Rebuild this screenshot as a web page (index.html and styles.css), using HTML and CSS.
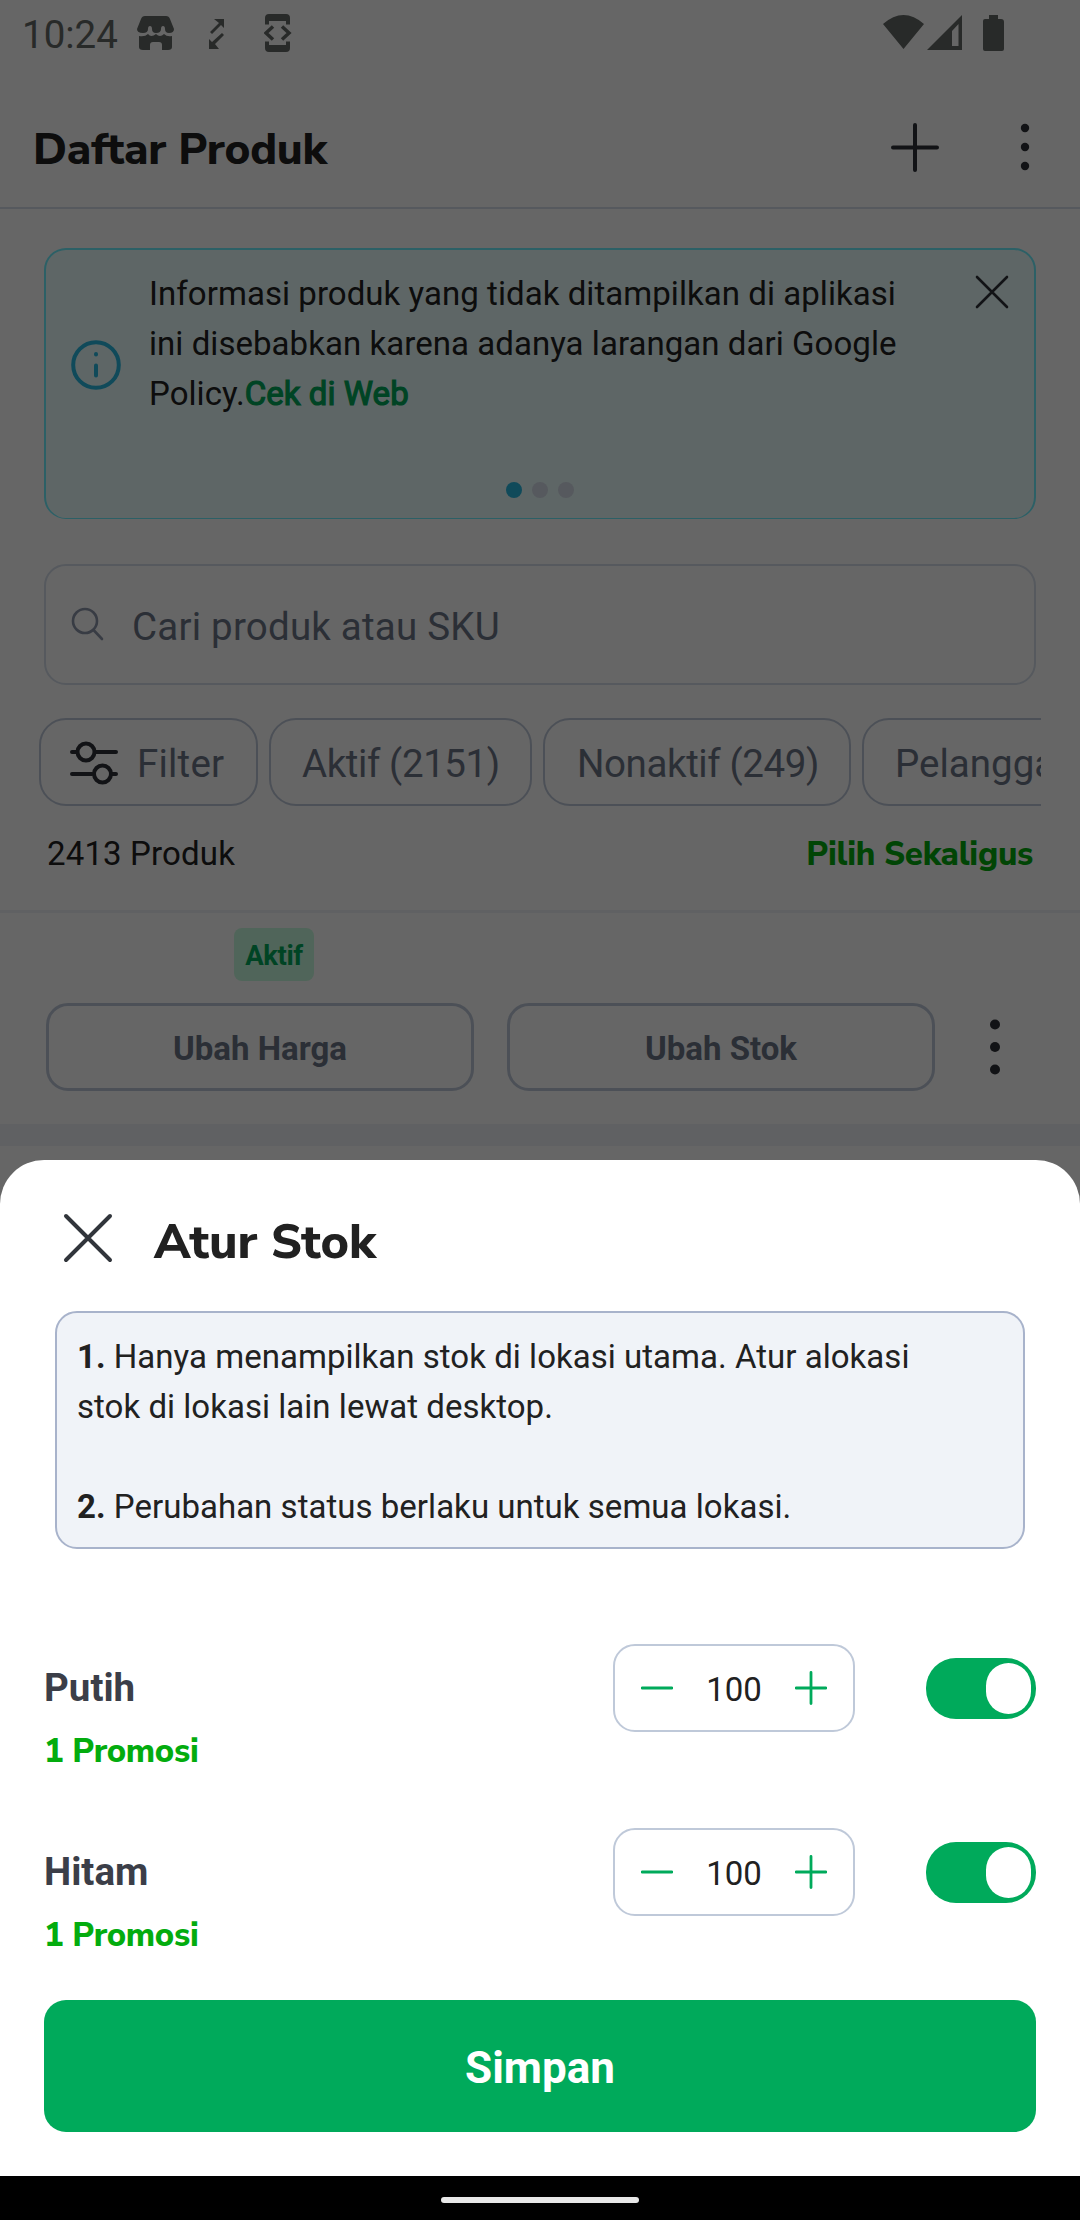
FILE: index.html
```html
<!DOCTYPE html>
<html lang="id">
<head>
<meta charset="utf-8">
<title>Daftar Produk</title>
<link rel="stylesheet" href="styles.css">
</head>
<body>
<div class="phone">
  <main class="page">
    <div class="statusbar">
      <span class="clock">10:24</span>
      <svg class="st-store" width="37" height="35" viewBox="0 0 37 35"><path d="M8 0h21q3 0 4 3l4 10q0 4-5 4-4 0-4-4 0-3-2-3t-2 3q0 4-5 4-4 0-4-4 0-3-2-3t-2 3q0 4-5 4-6 0-6-4L4 3q1-3 4-3zM2 20q6 1 9-2 3 4 8 0 4 4 8 0 3 3 8 2v11q0 3-4 3h-6v-5q0-3-3-3h-6q-3 0-3 3v5H6q-4 0-4-3z"/></svg>
      <svg class="st-arrows" width="16" height="30" viewBox="0 0 16 30"><path d="M5 0h10v9l-3-3-9 9-2-2 9-9zM0 20l3 3 10-9 2 2-9 9 4 5H0z"/></svg>
      <svg class="st-dev" width="28" height="38" viewBox="0 0 28 38"><path d="M1 10.500V4q0-4 4-4h17q4 0 4 4v6.500h-4V7H5v3.500zM1 27.500V34q0 4 4 4h17q4 0 4-4v-6.500h-4V31H5v-3.500z"/><path class="chev" d="M9 12.500L2 19l7 6.500M18 12.500L25 19l-7 6.500"/></svg>
      <svg class="st-right" width="122" height="37" viewBox="0 0 122 37"><path d="M0 9Q20.500-9 41 9L20.500 34zM79 0v35H44zM75.500 9L69 16v15h6.500zM106 0h9v4h3q3 0 3 3v27q0 2-2 2h-17q-2 0-2-2V6q0-2 2-2h4z" fill-rule="evenodd"/></svg>
    </div>
    <header class="appbar">
      <h1>Daftar Produk</h1>
      <svg class="plus" width="50" height="50" viewBox="0 0 50 50"><path d="M25 3v45M3 25.500h44"/></svg>
      <svg class="more" width="10" height="50" viewBox="0 0 10 50"><circle cx="5" cy="6" r="4.200"/><circle cx="5" cy="25" r="4.200"/><circle cx="5" cy="44" r="4.200"/></svg>
    </header>
    <section class="banner">
      <svg class="info" width="50" height="50" viewBox="0 0 50 50"><circle cx="25" cy="25" r="22.800"/><path d="M25 25.500v10M25 14v.5"/></svg>
      <p>Informasi produk yang tidak ditampilkan di aplikasi<br>ini disebabkan karena adanya larangan dari Google<br>Policy.<a>Cek di Web</a></p>
      <svg class="close-sm" width="34" height="34" viewBox="0 0 34 34"><path d="M2 2l30 30M32 2L2 32"/></svg>
      <div class="pager"><i class="on"></i><i></i><i></i></div>
    </section>
    <div class="search">
      <svg width="34" height="34" viewBox="0 0 34 34"><circle cx="14" cy="14" r="12"/><path d="M22.500 23l8.500 9"/></svg>
      <span>Cari produk atau SKU</span>
    </div>
    <div class="chips">
      <div class="chip filter"><svg width="48" height="44" viewBox="0 0 48 44"><path d="M2 11h5M26 11h20M2 33h20M41 33h5"/><circle cx="16" cy="11" r="8.500"/><circle cx="32.500" cy="33" r="8.500"/></svg><span>Filter</span></div>
      <div class="chip c-active">Aktif (2151)</div>
      <div class="chip c-inactive">Nonaktif (249)</div>
      <div class="chip">Pelangga</div>
    </div>
    <div class="count"><span>2413 Produk</span><b class="nun">Pilih Sekaligus</b></div>
    <article class="product">
      <span class="badge">Aktif</span>
      <div class="actions">
        <div class="btn">Ubah Harga</div>
        <div class="btn">Ubah Stok</div>
        <svg width="12" height="60" viewBox="0 0 12 60"><circle cx="6" cy="7.500" r="5"/><circle cx="6" cy="30" r="5"/><circle cx="6" cy="52.500" r="5"/></svg>
      </div>
    </article>
  </main>
  <div class="scrim"></div>
  <section class="sheet">
    <header class="sheet-head">
      <svg width="50" height="50" viewBox="0 0 50 50"><path d="M3 3l44 44M47 3L3 47"/></svg>
      <h2>Atur Stok</h2>
    </header>
    <div class="note"><p><b>1.</b> Hanya menampilkan stok di lokasi utama. Atur alokasi<br>stok di lokasi lain lewat desktop.</p><p><b>2.</b> Perubahan status berlaku untuk semua lokasi.</p></div>
    <div class="variant">
      <div class="v-name"><strong>Putih</strong><b class="nun">1 Promosi</b></div>
      <div class="stepper"><svg width="32" height="34" viewBox="0 0 32 34"><path d="M1 17h30"/></svg><span>100</span><svg width="32" height="34" viewBox="0 0 32 34"><path d="M1 17h30M16 1.500v31"/></svg></div>
      <div class="toggle"><i></i></div>
    </div>
    <div class="variant">
      <div class="v-name"><strong>Hitam</strong><b class="nun">1 Promosi</b></div>
      <div class="stepper"><svg width="32" height="34" viewBox="0 0 32 34"><path d="M1 17h30"/></svg><span>100</span><svg width="32" height="34" viewBox="0 0 32 34"><path d="M1 17h30M16 1.500v31"/></svg></div>
      <div class="toggle"><i></i></div>
    </div>
    <div class="save">Simpan</div>
  </section>
  <footer class="navbar"><i></i></footer>
</div>
</body>
</html>
```
FILE: styles.css
```css
* { box-sizing: border-box; }
body { margin: 0; font-family: Roboto, sans-serif; font-size: 33px; color: #212121; background: #fff; }
h1, h2, p { margin: 0; }
svg { display: block; flex: none; }
.phone { position: relative; width: 1080px; height: 2220px; overflow: hidden; display: flex; flex-direction: column; justify-content: flex-end; }
.page { position: absolute; inset: 0; background: #fff; }
.scrim { position: absolute; inset: 0; background: rgba(0, 0, 0, .6); }
.nun { font-family: "Nunito Sans", Nunito, "Open Sans", sans-serif; font-weight: 800; color: #03ac0e; letter-spacing: -.3px; }

.statusbar { height: 66px; display: flex; align-items: flex-start; padding: 14px 75px 0 22px; color: #646966; fill: #646966; }
.clock { font-size: 38.5px; line-height: 42px; width: 115px; }
.st-store { margin-top: 2px; }
.st-arrows { margin: 5px 0 0 35px; }
.st-dev { margin-left: 39px; }
.chev { fill: none; stroke: #646966; stroke-width: 3.5; }
.st-right { margin: 1px 0 0 auto; }

.appbar { height: 143px; border-bottom: 2px solid #d6dfeb; display: flex; align-items: center; padding: 21px 50px 0 33px; }
.appbar h1 { font: 800 44px/60px "Nunito Sans", Nunito, "Open Sans", sans-serif; letter-spacing: -.2px; flex: 1; padding-top: 5px; }
.plus { fill: none; stroke: #2e3137; stroke-width: 4; stroke-linecap: round; margin-right: 80px; }
.more { fill: #2e3137; }

.banner { position: relative; margin: 39px 44px 0; height: 271px; border: 2px solid #6ef0ff; border-bottom-width: 1px; border-radius: 22px; background: #ebfffe; display: flex; align-items: flex-start; padding: 19px 25px 0 25px; line-height: 50px; letter-spacing: .05px; }
.info { fill: none; stroke: #28b9e1; stroke-width: 4; stroke-linecap: round; margin: 71px 28px 0 0; }
.banner p { flex: 1; white-space: nowrap; }
.banner a { color: #00aa5b; -webkit-text-stroke: 1.2px #00aa5b; }
.close-sm { fill: none; stroke: #2e3137; stroke-width: 2.6; stroke-linecap: round; margin-top: 6px; }
.pager { position: absolute; left: 0; right: 0; bottom: 20px; display: flex; justify-content: center; gap: 10px; }
.pager i { width: 16px; height: 16px; border-radius: 50%; background: #d6dfeb; }
.pager .on { background: #28b9e1; }

.search { margin: 45px 44px 0; height: 121px; border: 2px solid #d6dfeb; border-radius: 22px; display: flex; align-items: center; padding-left: 25px; gap: 27px; font-size: 38.5px; color: #6d7588; letter-spacing: .22px; }
.search svg { fill: none; stroke: #8d96aa; stroke-width: 2.6; stroke-linecap: round; margin-bottom: 2px; }
.search span { padding-top: 3px; }
.chips { margin: 33px 39px 0; height: 88px; display: flex; gap: 11px; overflow: hidden; font-size: 38.5px; color: #6d7588; white-space: nowrap; }
.chip { flex: none; border: 2px solid #bfc9d9; border-radius: 27px; padding: 2px 31px 0; display: flex; align-items: center; }
.filter { width: 219px; padding: 2px 0 0 29px; gap: 19px; letter-spacing: .2px; }
.filter svg { fill: none; stroke: #2e3137; stroke-width: 4; stroke-linecap: round; }
.c-active { width: 263px; letter-spacing: -.4px; }
.c-inactive { width: 308px; letter-spacing: -.4px; padding-left: 32px; }
.count { margin-top: 23px; height: 81px; padding: 0 47px 0 47px; display: flex; justify-content: space-between; line-height: 50px; letter-spacing: .15px; }
.count .nun { padding-top: 1px; }
.product { height: 236px; border-top: 3px solid #f0f3f7; border-bottom: 22px solid #f0f3f7; padding: 15px 46px 0; }
.badge { display: block; width: 80px; height: 53px; margin-left: 188px; border-radius: 8px; background: #c9fde0; color: #00aa5b; font: 700 27.5px/55px Roboto, sans-serif; letter-spacing: -.4px; text-align: center; }
.actions { display: flex; gap: 33px; margin-top: 22px; align-items: center; }
.btn { width: 428px; height: 88px; border: 3px solid #bfc9d9; border-radius: 22px; color: #6d7588; font-weight: 700; line-height: 85px; text-align: center; }
.actions svg { fill: #2e3137; margin-left: 21px; }

.sheet { position: relative; height: 1016px; background: #fff; border-radius: 44px 44px 0 0; padding: 43px 44px 0; }
.sheet-head { display: flex; align-items: center; height: 70px; padding-left: 19px; gap: 41px; }
.sheet-head svg { fill: none; stroke: #31353b; stroke-width: 4; stroke-linecap: round; }
.sheet-head h2 { font: 800 48.5px/66px "Nunito Sans", Nunito, "Open Sans", sans-serif; letter-spacing: -.15px; padding-top: 7px; }
.note { margin: 38px 11px 0; height: 238px; border: 2px solid #a8b3cb; border-radius: 22px; background: #f0f3f8; padding: 19px 20px; line-height: 50px; white-space: nowrap; letter-spacing: .03px; }
.note p + p { margin-top: 50px; }
.variant { height: 184px; display: flex; align-items: flex-start; }
.note + .variant { margin-top: 95px; }
.v-name { flex: 1; display: flex; flex-direction: column; line-height: 50px; padding-top: 18px; }
.v-name strong { font-size: 38.5px; color: #3b3e48; height: 65px; line-height: 52px; }
.stepper { width: 242px; height: 88px; border: 2px solid #bfc9d9; border-radius: 22px; display: flex; align-items: center; justify-content: space-between; padding: 0 26px 0 26px; }
.stepper svg { fill: none; stroke: #00aa5b; stroke-width: 2.8; stroke-linecap: round; }
.stepper span { padding-top: 2px; }
.toggle { width: 110px; height: 61px; margin: 14px 0 0 71px; border-radius: 30px; background: #00aa5b; display: flex; justify-content: flex-end; padding: 5px; }
.toggle i { width: 45px; height: 51px; border-radius: 23px; background: #fff; }
.save { margin-top: -12px; height: 132px; border-radius: 22px; background: #00aa5b; color: #fff; font-weight: 700; font-size: 44px; line-height: 136px; text-align: center; }
.navbar { position: relative; height: 44px; background: #000; display: flex; justify-content: center; padding-top: 21px; }
.navbar i { width: 198px; height: 6px; border-radius: 3px; background: #e8e8e8; }
```
